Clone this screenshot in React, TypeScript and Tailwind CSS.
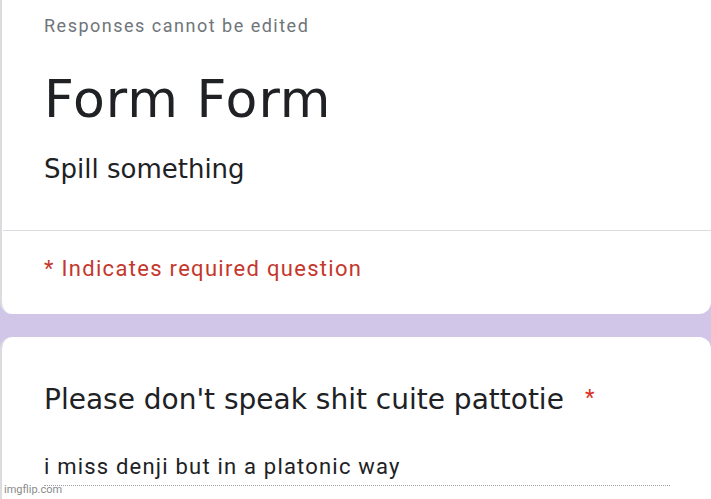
import React from 'react';

export default function App() {
  return (
    <div className="w-[711px] h-[499px] overflow-hidden bg-[#d1c5e8] relative font-['Roboto','Liberation_Sans',sans-serif]">
      {/* Header card */}
      <div className="h-[314px] bg-white rounded-b-[12px] border-l-2 border-[#dadce0] flex flex-col">
        <div className="px-[42px] pt-[14px] h-[230px]">
          <p className="text-[18px] leading-[24px] text-[#70757a] tracking-[1.5px]">
            Responses cannot be edited
          </p>
          <h1 className="mt-[31px] text-[52px] leading-[60px] tracking-[1px] text-[#202124] font-['DejaVu_Sans',Lato,sans-serif]">
            Form Form
          </h1>
          <p className="mt-[24px] text-[26px] leading-[32px] text-[#202124] font-['DejaVu_Sans',Lato,sans-serif]">
            Spill something
          </p>
        </div>
        <div className="h-px bg-[#dadce0] ml-[1px]" />
        <p className="px-[42px] pt-[24px] text-[22px] leading-[28px] tracking-[1.3px] text-[#c5372c]">
          * Indicates required question
        </p>
      </div>

      {/* Question card */}
      <div className="mt-[23px] h-[200px] bg-white rounded-t-[12px] border-l-2 border-[#dadce0] px-[42px] pt-[45px]">
        <div className="flex items-start">
          <span className="text-[28px] leading-[36px] text-[#202124] font-['DejaVu_Sans',Lato,sans-serif]">
            Please don't speak shit cuite pattotie
          </span>
          <span className="ml-[21px] mt-[2px] text-[22px] leading-[28px] text-[#d93025]">
            *
          </span>
        </div>
        <div className="mt-[35px] w-[626px] border-b border-dotted border-[#9aa0a6] pb-[4px]">
          <span className="text-[22px] leading-[28px] tracking-[1.2px] text-[#202124]">
            i miss denji but in a platonic way
          </span>
        </div>
      </div>

      <span className="absolute left-[4px] bottom-[2px] text-[11px] leading-[14px] text-[#8a8a8a]">
        imgflip.com
      </span>
    </div>
  );
}
